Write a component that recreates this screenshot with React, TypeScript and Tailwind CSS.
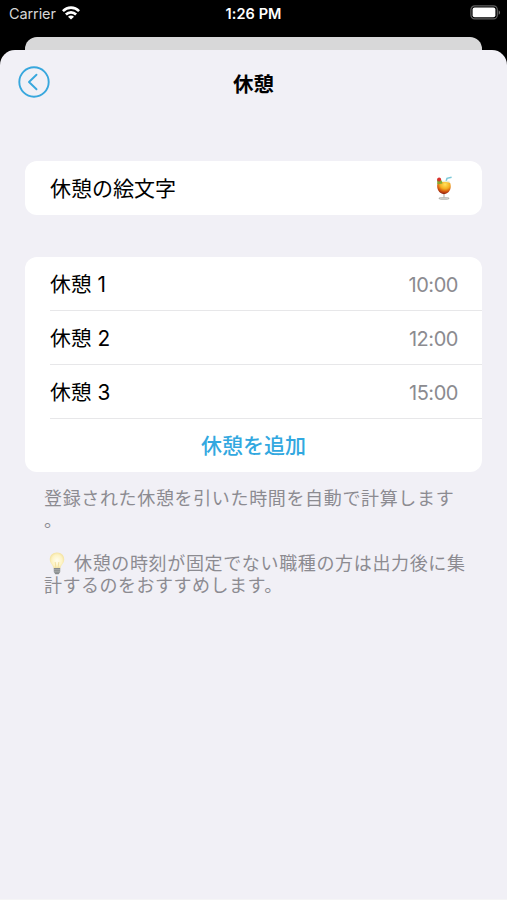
import type { ReactNode } from 'react';

const BREAKS = [
  { id: 1, time: '10:00' },
  { id: 2, time: '12:00' },
  { id: 3, time: '15:00' },
];

function WifiIcon() {
  return (
    <svg className="-mt-px" width="18" height="14" viewBox="0 0 18 14" fill="none" stroke="white" strokeWidth="2.6">
      <path d="M0.9 5.1C5.4 0.5 12.6 0.5 17.1 5.1" />
      <path d="M3.9 8.5C6.8 5.6 11.2 5.6 14.1 8.5" />
      <path d="M9 13.6L6 10.7C7.8 9.1 10.2 9.1 12 10.7Z" fill="white" stroke="none" />
    </svg>
  );
}

function BatteryIcon() {
  return (
    <svg width="31" height="15" viewBox="0 0 31 15">
      <rect x="0.9" y="0.9" width="26.4" height="13" rx="3.8" fill="none" stroke="#606060" strokeWidth="1.2" />
      <rect x="2.6" y="2.5" width="22.8" height="9.8" rx="2" fill="white" />
      <path d="M28.7 5.2C30.5 6 30.5 9 28.7 9.8Z" fill="#737373" />
    </svg>
  );
}

function CocktailIcon() {
  return (
    <svg width="18" height="25" viewBox="0 0 18 25">
      <defs>
        <radialGradient id="drink" cx="0.58" cy="0.2" r="0.8">
          <stop offset="0" stopColor="#ffe45c" />
          <stop offset="0.45" stopColor="#f5ae20" />
          <stop offset="0.75" stopColor="#cf510f" />
          <stop offset="1" stopColor="#8c1d12" />
        </radialGradient>
      </defs>
      <path d="M10.3 8L12 2.3L16.6 1.2" fill="none" stroke="#7bc8d8" strokeWidth="1.5" />
      <path d="M3.2 4.8H14.6V8H3.2Z" fill="#e6edda" />
      <path d="M2.6 7C5 5.6 12.5 5.6 15.2 7C17 12.8 14 17.8 9 18.2C4 17.8 1 12.8 2.6 7Z" fill="url(#drink)" />
      <path d="M2 4L6.5 4.3L7.5 7.4L2.4 8.2Z" fill="#83a935" />
      <circle cx="4.1" cy="3.4" r="2" fill="#d8322c" />
      <path d="M9 18V22" stroke="#c4c0ba" strokeWidth="1.4" />
      <ellipse cx="9" cy="22.4" rx="5.4" ry="1.3" fill="#b4b4b0" />
      <path d="M5 22.2H13" stroke="#e8e8e5" strokeWidth="0.7" />
    </svg>
  );
}

function BulbIcon() {
  return (
    <svg className="-mt-px" width="16" height="23" viewBox="0 0 16 23">
      <defs>
        <radialGradient id="bulb" cx="0.5" cy="0.5" r="0.6">
          <stop offset="0" stopColor="#fffdf0" />
          <stop offset="0.6" stopColor="#fdf3c4" />
          <stop offset="1" stopColor="#efd98d" />
        </radialGradient>
      </defs>
      <path d="M8 0.6C3.6 0.6 0.8 3.7 0.8 7.4C0.8 11 4 12.7 4.7 16.5H11.3C12 12.7 15.2 11 15.2 7.4C15.2 3.7 12.4 0.6 8 0.6Z" fill="url(#bulb)" />
      <path d="M6.2 10L7 16M9.8 10L9 16" fill="none" stroke="#f0dc98" strokeWidth="0.8" />
      <path d="M4.8 16H11.2V20L9.6 22.2H6.4L4.8 20Z" fill="#878b8d" />
      <path d="M4.8 17.8H11.2M5 19.8H11" stroke="#b9bcbc" strokeWidth="0.7" />
    </svg>
  );
}

function Card({ children }: { children: ReactNode }) {
  return <section className="overflow-hidden rounded-[12px] bg-white">{children}</section>;
}

export default function App() {
  return (
    <div className="flex h-[900px] w-[507px] flex-col overflow-hidden bg-black font-['Inter','Noto_Sans_CJK_JP',sans-serif] text-black">
      <header className="grid h-[37px] shrink-0 grid-cols-3 items-start pt-[3px] text-[14.5px] leading-5 text-white">
        <div className="flex items-center gap-[6px] pl-[9px]">
          <span className="pt-px tracking-[-0.1px] text-[#d6d6d6]">Carrier</span>
          <WifiIcon />
        </div>
        <div className="pt-px text-center font-semibold tracking-[0.1px]">1:26 PM</div>
        <div className="flex justify-end pt-[2px] pr-[6px]">
          <BatteryIcon />
        </div>
      </header>

      <div className="mx-[25px] h-[12.5px] shrink-0 rounded-t-[12px] bg-[#d8d8d9]" />

      <main className="flex-1 rounded-t-[15px] border-b border-[#f5f5f6] bg-[#f1f0f6]">
        <div className="grid h-[111px] grid-cols-[50px_1fr_50px] items-start pt-4">
          <button className="ml-[18px] block" aria-label="戻る">
            <svg width="32" height="32" viewBox="0 0 32 32" fill="none" stroke="#38a7dd">
              <circle cx="16" cy="16" r="14.7" strokeWidth="1.9" />
              <path d="M18.5 8.7L11 16L18.5 23.3" strokeWidth="1.9" strokeLinecap="round" strokeLinejoin="round" />
            </svg>
          </button>
          <h1 className="pt-[3px] text-center text-[20.5px] leading-8 font-bold">休憩</h1>
        </div>

        <div className="flex flex-col gap-[42.5px] px-[25px]">
          <Card>
            <div className="flex h-[54px] items-center justify-between pt-[2px] pr-[29px] pl-[25px] text-[21px]">
              <span>休憩の絵文字</span>
              <CocktailIcon />
            </div>
          </Card>

          <Card>
            {BREAKS.map((item) => (
              <div key={item.id} className="ml-[25px] flex h-[54px] items-center justify-between border-b border-[#e7e7e9] pt-[3px] pr-[24px]">
                <span className="text-[20.8px]">休憩 {item.id}</span>
                <span className="text-[20px] tracking-[-0.45px] text-[#8b8b90]">{item.time}</span>
              </div>
            ))}
            <button className="block h-[53px] w-full text-center text-[21px] font-medium text-[#32a8e0]">
              休憩を追加
            </button>
          </Card>
        </div>

        <div className="pt-[16px] pl-[44px] text-[18px] leading-[22px] tracking-[0.65px] whitespace-nowrap text-[#8c8b91]">
          <p>登録された休憩を引いた時間を自動で計算します<br />。</p>
          <p className="mt-[21px]">
            <span className="mr-[9px] ml-[5px] inline-block h-[18px] align-[-1px] leading-none"><BulbIcon /></span>
            休憩の時刻が固定でない職種の方は出力後に集<br />
            <span className="tracking-[0.5px]">計するのをおすすめします。</span>
          </p>
        </div>
      </main>
    </div>
  );
}
